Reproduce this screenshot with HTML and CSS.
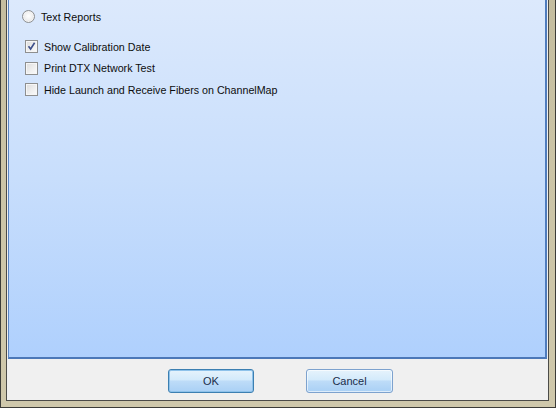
FILE: index.html
```html
<!DOCTYPE html>
<html>
<head>
<meta charset="utf-8">
<link rel="stylesheet" href="styles.css">
</head>
<body>
<div class="frame">
  <div class="window">
    <div class="panel">
      <div class="row radio-row">
        <span class="radio"></span>
        <span class="label">Text Reports</span>
      </div>
      <div class="checks">
        <div class="row">
          <span class="check checked">
            <svg width="11" height="11" viewBox="0 0 11 11"><path d="M2.5 5.2 L4.6 8 L8.6 1.8" fill="none" stroke="#3d4f8a" stroke-width="1.6"/></svg>
          </span>
          <span class="label">Show Calibration Date</span>
        </div>
        <div class="row">
          <span class="check"></span>
          <span class="label">Print DTX Network Test</span>
        </div>
        <div class="row">
          <span class="check"></span>
          <span class="label">Hide Launch and Receive Fibers on ChannelMap</span>
        </div>
      </div>
    </div>
    <div class="footer">
      <button class="btn default">OK</button>
      <button class="btn">Cancel</button>
    </div>
  </div>
</div>
</body>
</html>
```
FILE: styles.css
```css
html, body {
  margin: 0;
  padding: 0;
}
body {
  width: 556px;
  height: 408px;
  overflow: hidden;
  font-family: "Liberation Sans", Arial, sans-serif;
  font-size: 10.7px;
  color: #0d0d0d;
}
.frame {
  box-sizing: border-box;
  width: 556px;
  height: 408px;
  border: 1px solid #3c3c38;
  border-top: none;
  padding: 0 6px 6px 5px;
  background: linear-gradient(to bottom, #c4bd9f 0%, #cbc4a6 40%, #cfc8ab 100%);
  display: flex;
}
.window {
  flex: 1;
  display: flex;
  flex-direction: column;
  border: 1px solid #4b4b48;
  border-top: none;
  background: #f0f0f0;
  padding: 0 1px;
}
.panel {
  box-sizing: border-box;
  height: 359px;
  border-left: 1px solid #5a86c4;
  border-right: 2px solid #4f7cbd;
  border-bottom: 2px solid #4c78b8;
  background: linear-gradient(to bottom, #dce9fc 0%, #c8defc 50%, #afd0fd 100%);
  padding: 6px 0 0 13px;
}
.row {
  display: flex;
  align-items: center;
  height: 21px;
}
.radio {
  box-sizing: border-box;
  width: 13px;
  height: 13px;
  border-radius: 50%;
  border: 1px solid #8d8f91;
  background: radial-gradient(circle at 50% 45%, #ffffff 0%, #f1f1f1 45%, #d4d4d4 100%);
  box-shadow: inset 0 0 0 1px #f4f4f4;
}
.radio-row .label {
  margin-left: 6px;
}
.checks {
  margin-top: 9px;
  padding-left: 3px;
  display: flex;
  flex-direction: column;
}
.checks .row {
  height: 21.5px;
}
.check {
  box-sizing: border-box;
  width: 13px;
  height: 13px;
  border: 1px solid #8e8f8f;
  background: linear-gradient(135deg, #dcdcdc 0%, #f0f0f0 60%, #fbfbfb 100%);
  box-shadow: inset 0 0 0 1px #f6f6f6;
  display: flex;
  align-items: center;
  justify-content: center;
}
.check svg {
  display: block;
}
.checks .label {
  margin-left: 6px;
}
.footer {
  flex: 1;
  display: flex;
  align-items: flex-start;
  padding: 10px 0 0 160px;
  gap: 52px;
}
.btn {
  box-sizing: border-box;
  height: 24px;
  width: 86px;
  margin: 0;
  padding: 0;
  border: 1px solid #7da2ce;
  border-radius: 3px;
  background: linear-gradient(to bottom, #e6f3fc 0%, #d3eafb 45%, #bedcf8 50%, #a9d0f5 100%);
  box-shadow: inset 0 0 0 1px rgba(255,255,255,0.6);
  font-family: "Liberation Sans", Arial, sans-serif;
  font-size: 11px;
  color: #1b2d4a;
}
.btn.default {
  border-color: #3c7fb1;
  box-shadow: inset 0 0 0 1px #8ec2ea;
}
.btn + .btn {
  width: 87px;
}
```
